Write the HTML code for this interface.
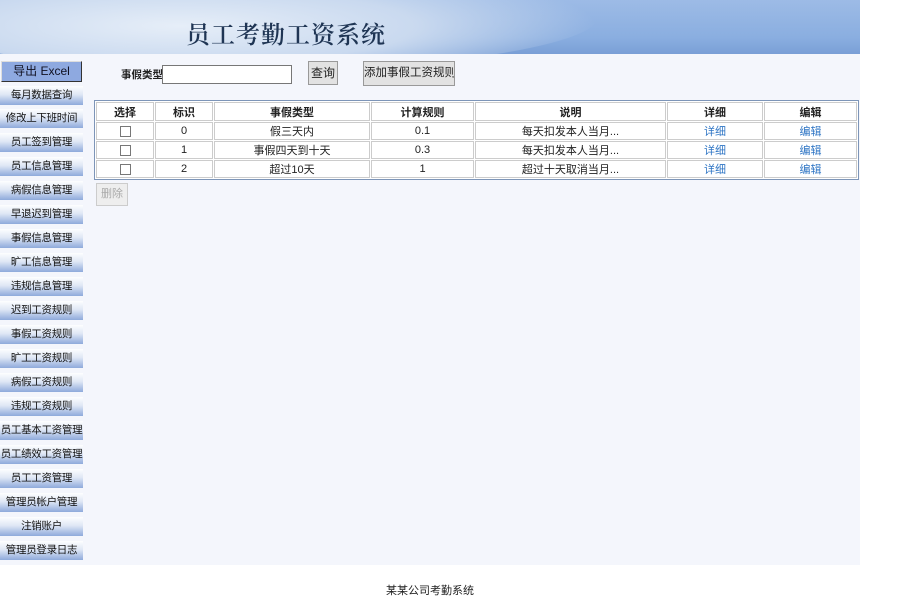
<!DOCTYPE html><html><head><meta charset="utf-8"><style>
*{margin:0;padding:0;box-sizing:border-box}
body{width:900px;height:605px;background:#fff;font-family:"Liberation Sans","Noto Sans CJK SC",sans-serif;font-size:11px;color:#222;position:relative;overflow:hidden}
.hdr{position:absolute;left:0;top:0;width:860px;height:54px;background:linear-gradient(180deg,#9dbbe6 0%,#8aaee0 70%,#7a9fd6 100%);overflow:hidden}
.hdr .w1{position:absolute;left:-100px;top:-40px;width:700px;height:110px;border-radius:50%;background:radial-gradient(ellipse at 40% 60%,#e6eef8 0%,#c9d9ef 40%,rgba(160,190,230,0) 70%)}
.hdr h1{position:absolute;left:186px;top:15px;font-family:"Noto Serif CJK SC","Liberation Serif",serif;font-size:24px;font-weight:600;color:#1f3554;letter-spacing:1px}
.main{position:absolute;left:0;top:54px;width:860px;height:511px;background:#f4f6fc}
.nav{position:absolute;left:0;width:83px;height:19px;background:linear-gradient(180deg,#fdfeff 0%,#dfe7f5 45%,#8eaadb 100%);text-align:center;line-height:19px;font-size:10.5px;color:#111;white-space:nowrap;overflow:hidden;letter-spacing:-0.3px}
.exp{position:absolute;left:1px;top:61px;width:81px;height:21px;background:#8ea9e0;border:1px solid #333;border-top-color:#ddd;border-left-color:#ddd;text-align:center;line-height:19px;font-size:12px;color:#112}
.lbl{position:absolute;left:121px;top:67px;font-weight:bold;font-size:10.5px}
.inp{position:absolute;left:162px;top:65px;width:130px;height:19px;background:#fff;border:1px solid #777}
.btn{position:absolute;background:#e2e2e2;border:1px solid #999;text-align:center;font-size:12px;color:#222;white-space:nowrap;overflow:hidden}
table{position:absolute;left:94px;top:100px;width:765px;border-collapse:separate;border-spacing:1px;border:1px solid #7d95b8;background:#fff;font-size:11px}
td,th{border:1px solid #ccc;text-align:center;height:18px;background:#fff}
th{font-weight:bold;height:19px}
.cb{display:inline-block;width:11px;height:11px;border:1px solid #777;background:#fff;vertical-align:middle}
a{color:#2d74c4;text-decoration:none}
.foot{position:absolute;left:0;width:860px;top:582px;text-align:center;font-size:11px}
</style></head><body>
<div class="hdr"><div class="w1"></div><h1>员工考勤工资系统</h1></div>
<div class="main"></div>
<div class="exp">导出 Excel</div>
<div class="nav" style="top:86px">每月数据查询</div>
<div class="nav" style="top:109px">修改上下班时间</div>
<div class="nav" style="top:133px">员工签到管理</div>
<div class="nav" style="top:157px">员工信息管理</div>
<div class="nav" style="top:181px">病假信息管理</div>
<div class="nav" style="top:205px">早退迟到管理</div>
<div class="nav" style="top:229px">事假信息管理</div>
<div class="nav" style="top:253px">旷工信息管理</div>
<div class="nav" style="top:277px">违规信息管理</div>
<div class="nav" style="top:301px">迟到工资规则</div>
<div class="nav" style="top:325px">事假工资规则</div>
<div class="nav" style="top:349px">旷工工资规则</div>
<div class="nav" style="top:373px">病假工资规则</div>
<div class="nav" style="top:397px">违规工资规则</div>
<div class="nav" style="top:421px">员工基本工资管理</div>
<div class="nav" style="top:445px">员工绩效工资管理</div>
<div class="nav" style="top:469px">员工工资管理</div>
<div class="nav" style="top:493px">管理员帐户管理</div>
<div class="nav" style="top:517px">注销账户</div>
<div class="nav" style="top:541px">管理员登录日志</div>
<div class="lbl">事假类型</div>
<div class="inp"></div>
<div class="btn" style="left:308px;top:61px;width:30px;height:24px;line-height:22px">查询</div>
<div class="btn" style="left:363px;top:61px;width:92px;height:25px;line-height:23px;font-size:11.5px">添加事假工资规则</div>
<table>
<tr><th style="width:58px">选择</th><th style="width:58px">标识</th><th style="width:156px">事假类型</th><th style="width:103px">计算规则</th><th style="width:191px">说明</th><th style="width:96px">详细</th><th>编辑</th></tr>
<tr><td><span class="cb"></span></td><td>0</td><td>假三天内</td><td>0.1</td><td>每天扣发本人当月...</td><td><a>详细</a></td><td><a>编辑</a></td></tr>
<tr><td><span class="cb"></span></td><td>1</td><td>事假四天到十天</td><td>0.3</td><td>每天扣发本人当月...</td><td><a>详细</a></td><td><a>编辑</a></td></tr>
<tr><td><span class="cb"></span></td><td>2</td><td>超过10天</td><td>1</td><td>超过十天取消当月...</td><td><a>详细</a></td><td><a>编辑</a></td></tr>
</table>
<div class="btn" style="left:96px;top:183px;width:32px;height:23px;line-height:21px;color:#aaa;background:#eee;border-color:#ccc;font-size:11px">删除</div>
<div class="foot">某某公司考勤系统</div>
</body></html>
